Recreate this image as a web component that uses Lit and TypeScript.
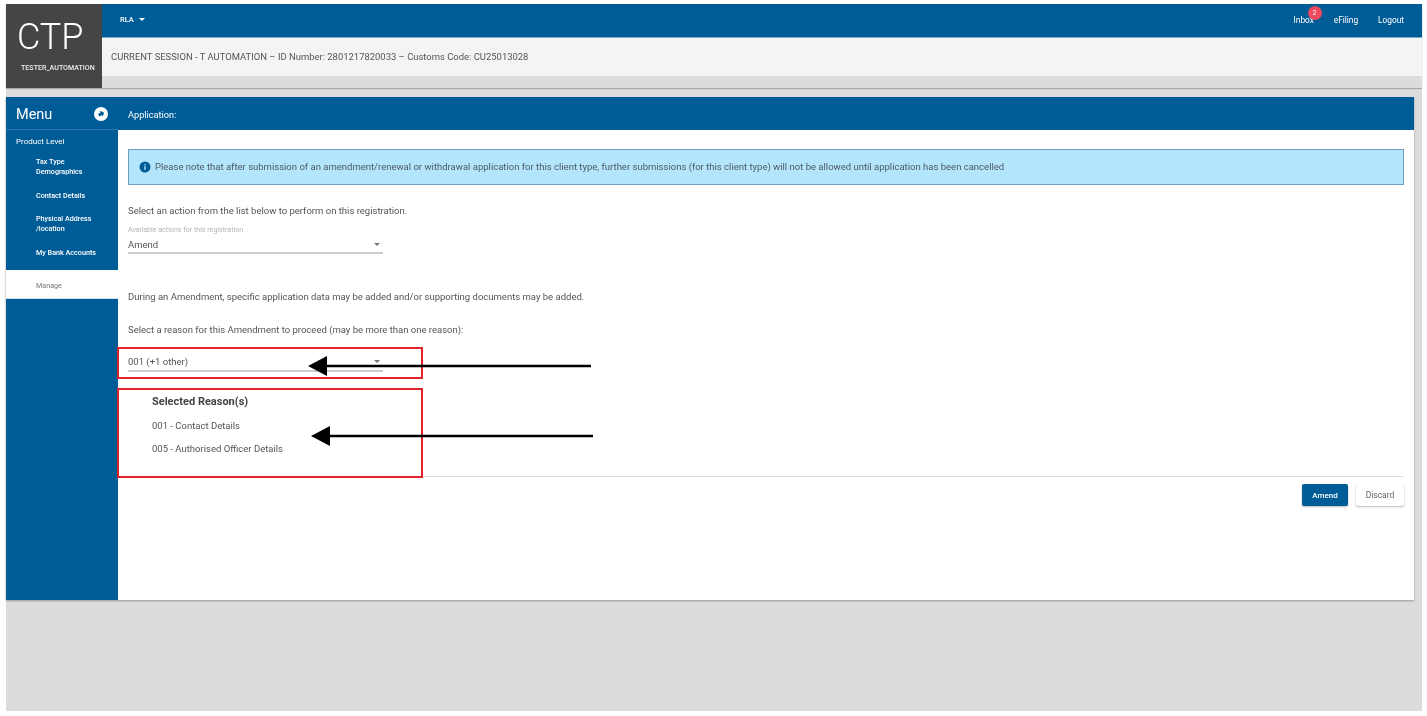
import { LitElement, html, css } from "lit";
import { customElement } from "lit/decorators.js";

@customElement("app-root")
export class AppRoot extends LitElement {
  static styles = css`
    :host { display: block; width: 1427px; height: 716px; background: #fff; overflow: hidden; font-family: Roboto, "Liberation Sans", sans-serif; color: #555; }
    * { box-sizing: border-box; }
    .page { position: relative; margin: 4px 5px 0 6px; height: 707px; background: #dcdcdc; filter: blur(0.6px); display: flex; flex-direction: column; }
    .top { display: flex; height: 84px; box-shadow: 0 1px 1px #aaa; background: #dcdcdc; }
    .logo { width: 96px; background: #454545; color: #fff; display: flex; flex-direction: column; align-items: flex-start; }
    .logo b { font-weight: 300; font-size: 36px; line-height: 40px; margin: 13px 0 0 11px; }
    .logo span { font-size: 7.1px; font-weight: 500; margin: 7px 0 0 15px; line-height: 8px; white-space: nowrap; color: #eee; }
    .topmain { flex: 1; display: flex; flex-direction: column; }
    .bar { height: 34px; background: #005c97; color: #fff; display: flex; align-items: center; padding: 0 18px 0 18px; font-size: 8.3px; font-weight: 400; border-bottom: 1px solid #7fa9c9; }
    .rla { display: flex; align-items: center; gap: 5px; margin-top: -3px; font-size: 7.5px; font-weight: 500; }
    .caret { width: 0; height: 0; border-left: 3px solid transparent; border-right: 3px solid transparent; border-top: 3px solid currentColor; }
    .links { margin-left: auto; display: flex; gap: 20px; margin-top: -1px; }
    .links span { position: relative; }
    .badge { position: absolute; left: 14px; top: -9px; width: 14px; height: 14px; border-radius: 50%; background: #ef4a60; font-size: 7px; font-style: normal; display: flex; align-items: center; justify-content: center; }
    .session { height: 38px; background: #f4f4f4; display: flex; align-items: center; padding: 0 0 1px 9px; font-size: 9.45px; color: #555; white-space: nowrap; }
    .panel { margin-top: 9px; width: 1408px; height: 503px; display: flex; background: #fff; box-shadow: 0 1px 2px #999; }
    .side { width: 112px; background: #005c97; color: #fff; flex: none; display: flex; flex-direction: column; }
    .sidehead { height: 33px; display: flex; align-items: center; justify-content: space-between; padding: 2px 10px 0 10px; font-size: 14.5px; border-bottom: 1px solid #2e7aab; }
    .level { font-size: 8px; font-weight: 400; padding: 6px 0 0 10px; line-height: 12px; }
    .item { font-size: 7.2px; font-weight: 500; line-height: 10px; padding-left: 30px; margin-top: 14px; width: 100px; }
    .item.first { margin-top: 9px; }
    .item.tight { margin-top: 13px; }
    .manage { background: #fff; color: #777; height: 29px; margin-top: 12px; padding: 3px 0 0 30px; font-size: 7.2px; display: flex; align-items: center; border-bottom: 1px solid #cfdde8; }
    .main { flex: 1; min-width: 0; display: flex; flex-direction: column; }
    .mainhead { height: 33px; background: #005c97; color: #fff; display: flex; align-items: center; padding: 1px 0 0 10px; font-size: 9.2px; font-weight: 400; flex: none; }
    .body { padding: 19px 10px 0 10px; flex: 1; font-size: 9.5px; }
    .alert { height: 36px; background: #b3e5fc; border: 1px solid #6f9fbd; display: flex; align-items: center; gap: 4px; padding: 0 0 1px 10px; color: #4d5a63; font-size: 9.5px; white-space: nowrap; }
    .alert svg { flex: none; }
    .line { white-space: nowrap; line-height: 12px; margin-top: 21px; }
    .line.l1 { margin-top: 20px; }
    .line.l2 { margin-top: 37px; }
    .select { width: 255px; border-bottom: 2px solid #ccc; display: flex; justify-content: space-between; align-items: center; padding-right: 3px; color: #555; }
    .hint { font-size: 7.1px; color: #b5b5b5; margin-top: 9px; line-height: 8px; white-space: nowrap; }
    .sel1 { height: 18px; margin-top: 2px; }
    .sel2 { height: 19px; margin-top: 17px; }
    .select .caret { color: #777; }
    .reasons { padding-left: 24px; margin-top: 24px; }
    .reasons h4 { margin: 0 0 12px; font-size: 11px; font-weight: 700; color: #444; line-height: 12px; }
    .reasons div { line-height: 12px; margin-bottom: 11px; }
    .divider { border-top: 1px solid #ddd; margin-top: 21px; }
    .actions { display: flex; justify-content: flex-end; gap: 8px; margin-top: 7px; }
    .btn { height: 22px; border-radius: 2px; display: flex; align-items: center; justify-content: center; font-size: 8px; font-weight: 500; box-shadow: 0 1px 2px #bbb; }
    .amend { width: 46px; background: #005c97; color: #fff; }
    .discard { width: 48px; background: #fff; color: #666; font-weight: 400; font-size: 8.5px; }
    .red { position: absolute; border: 2px solid #e2222b; }
    .r1 { left: 111px; top: 343px; width: 306px; height: 32px; }
    .r2 { left: 111px; top: 384px; width: 306px; height: 90px; }
    .arrow { position: absolute; }
    .a1 { left: 300px; top: 350px; }
    .a2 { left: 303px; top: 420px; }
  `;

  render() {
    return html`
      <div class="page">
        <div class="top">
          <div class="logo"><b>CTP</b><span>TESTER_AUTOMATION</span></div>
          <div class="topmain">
            <div class="bar">
              <div class="rla">RLA <i class="caret"></i></div>
              <div class="links">
                <span>Inbox<i class="badge">2</i></span><span>eFiling</span><span>Logout</span>
              </div>
            </div>
            <div class="session">CURRENT SESSION - T AUTOMATION – ID Number: 2801217820033 – Customs Code: CU25013028</div>
          </div>
        </div>
        <div class="panel">
          <div class="side">
            <div class="sidehead">
              <span>Menu</span>
              <svg width="14" height="14" viewBox="0 0 14 14"><circle cx="7" cy="7" r="7" fill="#fff"/><path d="M10 6.4 7.4 3.8v1.7H4.4v3h3v1.7L10 7.6z" fill="#005c97" transform="rotate(-30 7 7)"/></svg>
            </div>
            <div class="level">Product Level</div>
            <div class="item first">Tax Type Demographics</div>
            <div class="item">Contact Details</div>
            <div class="item tight">Physical Address /location</div>
            <div class="item">My Bank Accounts</div>
            <div class="manage">Manage</div>
          </div>
          <div class="main">
            <div class="mainhead">Application:</div>
            <div class="body">
              <div class="alert">
                <svg width="12" height="12" viewBox="0 0 12 12"><circle cx="6" cy="6" r="5.5" fill="#005c97"/><rect x="5.3" y="5.2" width="1.4" height="3.6" fill="#b3e5fc"/><rect x="5.3" y="3.1" width="1.4" height="1.3" fill="#b3e5fc"/></svg>
                Please note that after submission of an amendment/renewal or withdrawal application for this client type, further submissions (for this client type) will not be allowed until application has been cancelled
              </div>
              <div class="line l1">Select an action from the list below to perform on this registration.</div>
              <div class="hint">Available actions for this registration</div>
              <div class="select sel1"><span>Amend</span><i class="caret"></i></div>
              <div class="line l2">During an Amendment, specific application data may be added and/or supporting documents may be added.</div>
              <div class="line">Select a reason for this Amendment to proceed (may be more than one reason):</div>
              <div class="select sel2"><span>001 (+1 other)</span><i class="caret"></i></div>
              <div class="reasons">
                <h4>Selected Reason(s)</h4>
                <div>001 - Contact Details</div>
                <div>005 - Authorised Officer Details</div>
              </div>
              <div class="divider"></div>
              <div class="actions">
                <div class="btn amend">Amend</div>
                <div class="btn discard">Discard</div>
              </div>
            </div>
          </div>
        </div>
        <div class="red r1"></div>
        <div class="red r2"></div>
        <svg class="arrow a1" width="290" height="24" viewBox="0 0 290 24"><path d="M285 12H20" stroke="#000" stroke-width="2.5"/><path d="M2 12 21 2v20z" fill="#000"/></svg>
        <svg class="arrow a2" width="290" height="24" viewBox="0 0 290 24"><path d="M284 12H20" stroke="#000" stroke-width="2.5"/><path d="M2 12 21 2v20z" fill="#000"/></svg>
      </div>
    `;
  }
}
